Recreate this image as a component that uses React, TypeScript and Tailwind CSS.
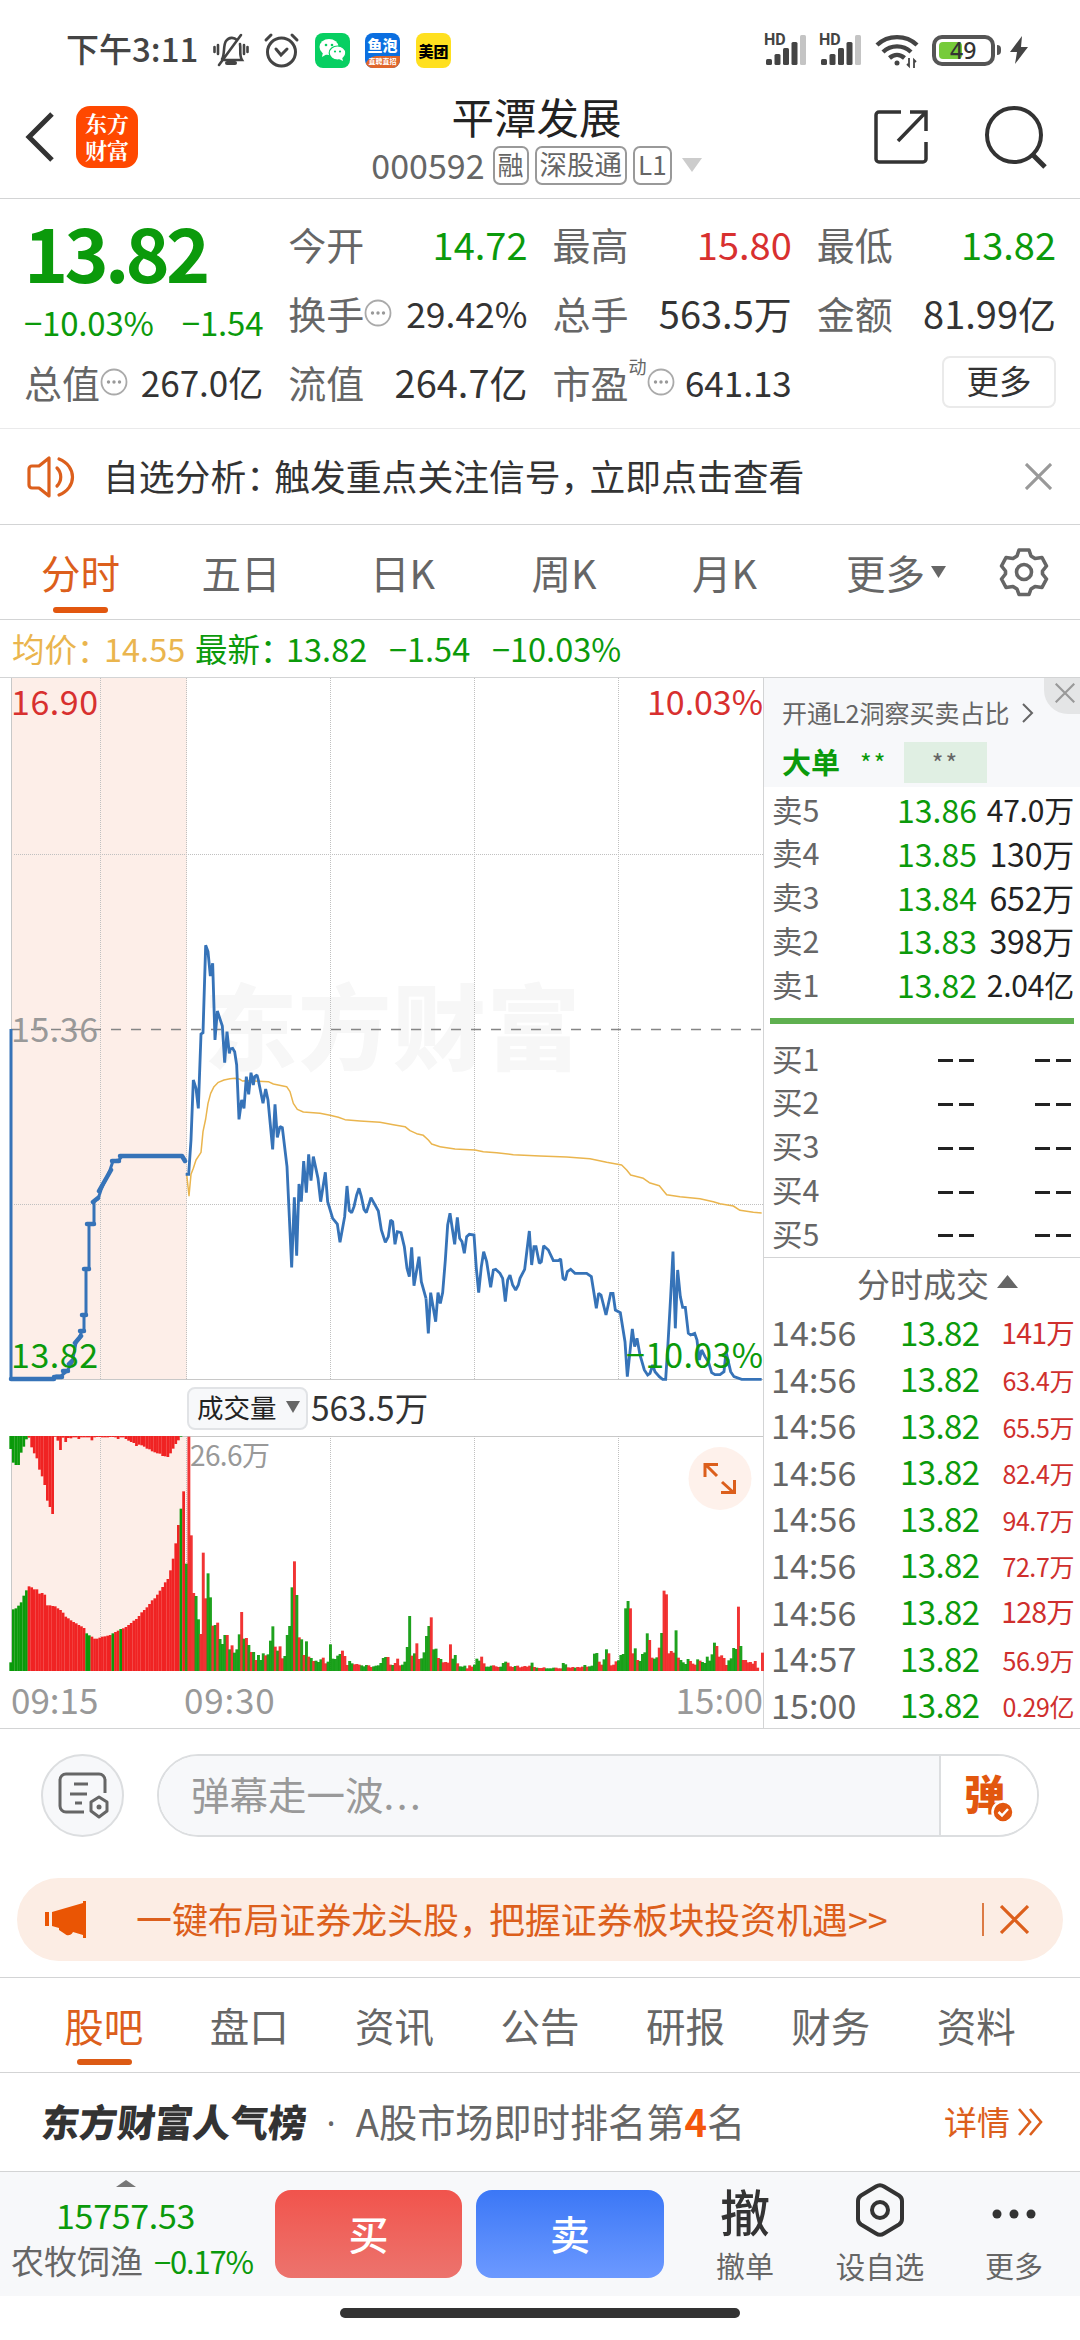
import React from "react";

type Level = {
  label: string;
  price: string;
  amount: string;
};

type Trade = {
  time: string;
  price: string;
  amount: string;
};

const sells: Level[] = [
  { label: "卖5", price: "13.86", amount: "47.0万" },
  { label: "卖4", price: "13.85", amount: "130万" },
  { label: "卖3", price: "13.84", amount: "652万" },
  { label: "卖2", price: "13.83", amount: "398万" },
  { label: "卖1", price: "13.82", amount: "2.04亿" },
];

const buys = ["买1", "买2", "买3", "买4", "买5"];

const trades: Trade[] = [
  { time: "14:56", price: "13.82", amount: "141万" },
  { time: "14:56", price: "13.82", amount: "63.4万" },
  { time: "14:56", price: "13.82", amount: "65.5万" },
  { time: "14:56", price: "13.82", amount: "82.4万" },
  { time: "14:56", price: "13.82", amount: "94.7万" },
  { time: "14:56", price: "13.82", amount: "72.7万" },
  { time: "14:56", price: "13.82", amount: "128万" },
  { time: "14:57", price: "13.82", amount: "56.9万" },
  { time: "15:00", price: "13.82", amount: "0.29亿" },
];

const infoTabs = ["股吧", "盘口", "资讯", "公告", "研报", "财务", "资料"];

// price lines, three units per pixel
const morningPrice =
  "17,763 26,763 33,660 40,480 48,505 55,565 63,342 69,338 77,76 84,95 91,168 98,130 105,360 112,273 127,318 134,428 141,335 148,400 151,387 158,385 164,395 170,435 177,598 185,540 192,565 199,470 206,523 213,458 220,495 224,470 231,465 235,480 249,550 257,507 264,540 278,688 285,553 292,652 300,620 307,623 321,740 335,1042 343,832 350,1007 357,792 364,845 371,723 379,818 386,703 393,782 400,710 414,775 422,845 436,757 443,845 458,895 472,912 480,967 494,890 501,798 508,872 515,878 522,860 530,825 537,805 544,830 552,868 559,878 573,833 595,873 604,930 616,967 625,950 632,900 638,905 645,973 652,935 663,938 673,980 681,1045 688,1070 695,982 702,1097 717,1010 724,1085 738,1135";
const afternoonPrice =
  "138,1195 145,1300 152,1178 167,1265 174,1178 181,1210 188,1178 196,1080 203,975 210,940 224,1033 232,952 239,1015 246,1025 253,1060 260,1010 268,1003 282,1005 289,1105 296,1178 304,1100 311,1055 320,1085 332,1162 340,1110 347,1108 360,1120 368,1135 376,1205 383,1140 390,1125 398,1155 407,1170 415,1155 420,1135 434,1108 441,1050 448,993 455,1095 462,1040 468,1040 478,1090 484,1085 491,1037 505,1050 520,1082 535,1082 542,1077 549,1135 556,1140 562,1115 572,1108 585,1120 620,1120 634,1130 642,1180 649,1225 656,1180 663,1185 678,1245 692,1180 699,1180 706,1230 721,1238 735,1325 742,1430 750,1355 757,1287 764,1340 771,1315 780,1365 793,1410 803,1425 810,1420 818,1395 825,1415 838,1430 848,1438 857,1438 864,1330 872,1190 879,1055 886,1285 893,1110 901,1190 908,1222 916,1222 925,1300 932,1305 944,1300 951,1320 958,1380 965,1350 975,1370 985,1385 995,1418 1005,1424 1020,1424 1032,1415 1038,1355 1045,1385 1052,1415 1062,1430 1085,1438 1145,1438";
const morningAverage =
  "20,763 27,827 33,763 40,745 48,720 63,697 69,635 77,597 84,550 92,520 102,500 115,487 132,480 150,476 165,475 180,478 187,483 200,482 265,485 280,492 320,500 330,515 340,550 352,568 370,576 420,580 450,586 475,592 495,599 540,603 600,607 640,614 675,620 690,632 710,641 730,646 745,660 755,672 780,680";
const afternoonAverage =
  "180,740 225,747 285,750 310,755 350,758 400,764 480,768 560,771 630,776 680,787 725,795 740,810 752,825 790,835 808,848 838,857 860,884 900,890 960,896 1000,905 1020,911 1060,918 1080,931 1120,937 1145,939";

// volume bars: top edge and colour, base line at 903
const auctionBars =
  "877g 718g 715g 707g 697g 677g 661g 649r 652r 658r 658r 671r 669r 674r 706r 706r 708r 709r 715r 720r 728r 740r 745r 751r 756r 760r 765r 769r 774r 790g 796g 800r 806r 806r 803r 800r 799r 797r 795r 790g 786r 782r 777g 775r 771r 765r 759r 752r 747r 738r 727r 720r 712r 702r 691r 685r 674r 662r 651r 637r 627r 601r 566r 520r 465r 416g 364r";
const sessionBars =
  "581g 200r 496r 669r 678g 748g 792r 548r 685r 610g 682g 767r 765g 758r 807g 822g 795g 795r 838g 826r 848g 838g 793g 726r 806g 804r 825g 846r 846g 870r 855g 870g 850g 856r 853g 812g 769g 830r 842g 829r 865r 858g 795g 768g 652g 574r 675g 802r 808g 855r 814g 860r 864g 873r 872g 876g 868g 863r 880r 875g 823g 866g 867g 857g 852g 842r 858r 885r 873g 880g 883r 882r 884r 886g 889g 885g 886r 891r 889g 887g 886g 879g 864g 861g 861r 884r 885g 879r 866r 886r 884g 875g 831g 738g 857r 850g 820r 867r 865g 847g 798g 768g 742r 838g 836g 864r 867g 877r 876r 878r 823r 866g 855g 880r 889g 890g 887g 895r 886r 890r 884g 866g 872g 860r 880r 890g 890g 887g 886r 889r 891r 890g 879g 875g 878r 889r 891r 888g 887r 892r 890r 888r 890r 887r 878g 891r 893g 894r 894r 892r 895g 895g 895g 893g 893r 895r 895r 879g 883g 892r 893r 891r 893g 891r 892r 890r 885g 890r 889g 887g 851g 849g 875r 884r 868g 838g 850r 886r 884r 874r 871g 855g 852g 715g 693g 715r 850r 835g 870r 873g 852g 847g 790g 810r 863r 866g 862g 833r 789g 662r 673r 850r 843r 848r 781g 863r 870g 877g 882g 867g 873r 881r 884r 868g 872r 876g 879g 860g 872g 853g 818g 828r 860r 856r 864r 885r 871g 865g 834g 837g 710r 828g 870r 870r 877r 876r 881r 873r 893r 903r 848r";
const unmatchedBars =
  "237g 278g 285g 285g 248g 230g 208g 203r 232r 250r 265r 299r 319r 345r 392r 411r 432r 200r 212r 240r 203r 216r 204r 205r 202r 202r 207r 202r 202r 202r 202r 211r 202r 201r 201r 202r 202r 202r 201r 201r 202r 207r 202r 202r 207r 212r 216r 219r 228r 224r 226r 230r 236r 238r 244r 247r 250r 251r 258r 259r 261r 250r 236r 222r 211r 200g";

function parseBars(data: string) {
  return data.split(" ").map((item) => ({
    y: parseInt(item, 10),
    fill: item.endsWith("g") ? "#0b9a0b" : "#f02323",
  }));
}

function InfoDot() {
  return (
    <svg width="28" height="28" viewBox="0 0 28 28" className="shrink-0">
      <circle cx="14" cy="14" r="12.5" fill="none" stroke="#aaa" strokeWidth="1.8" />
      <circle cx="8.5" cy="14" r="1.7" fill="#999" />
      <circle cx="14" cy="14" r="1.7" fill="#999" />
      <circle cx="19.5" cy="14" r="1.7" fill="#999" />
    </svg>
  );
}

function Cross({ size, color, width = 2.5 }: { size: number; color: string; width?: number }) {
  return (
    <svg width={size} height={size} viewBox="0 0 28 28" className="shrink-0">
      <path d="M1 1L27 27M27 1L1 27" stroke={color} strokeWidth={width} fill="none" />
    </svg>
  );
}

function Signal() {
  return (
    <div className="relative h-[30px] w-[42px]">
      <svg width="42" height="30" viewBox="0 0 42 30">
        <rect x="1" y="24" width="6" height="6" rx="1.5" fill="#444" />
        <rect x="9.5" y="19" width="6" height="11" rx="1.5" fill="#444" />
        <rect x="18" y="13" width="6" height="17" rx="1.5" fill="#444" />
        <rect x="26.5" y="7" width="6" height="23" rx="1.5" fill="#444" />
        <rect x="35" y="0" width="6" height="30" rx="1.5" fill="#c4c4c4" />
      </svg>
      <span className="absolute -left-px -top-[3px] font-[Roboto,sans-serif] text-[16px] font-bold leading-none text-[#444]">
        HD
      </span>
    </div>
  );
}

function StatusBar() {
  return (
    <div className="flex h-[84px] items-center pt-4 pl-[66px] pr-[51px] text-[#444]">
      <span className="-mt-1 w-[147px] whitespace-nowrap text-[33px] font-medium leading-none">下午3:11</span>
      <svg width="36" height="36" viewBox="0 0 36 36" fill="none" stroke="#444" strokeWidth="2.6" strokeLinecap="round">
        <path d="M9 27C12 23 10 13 13 9C16 5 21 5 24 8M27 12C28 18 26 23 29 28H10M28 3L6 33" />
        <path d="M14 31h8" strokeWidth="4" />
        <path d="M5 13v9M1.5 15v5M31 13v9M34.5 15v5" />
      </svg>
      <svg className="ml-[14px]" width="37" height="37" viewBox="0 0 37 37" fill="none" stroke="#444" strokeWidth="3" strokeLinecap="round">
        <circle cx="18.5" cy="20" r="14" />
        <path d="M13 17L18 23L24 17M3 8L8 3M29 3L34 8" />
      </svg>
      <div className="ml-[15px] flex size-[35px] items-center justify-center rounded-[8px] bg-[#07cf62]">
        <svg width="27" height="24" viewBox="0 0 27 24">
          <ellipse cx="10" cy="9" rx="9.5" ry="8" fill="#fff" />
          <path d="M4 14l-1 5 5-3z" fill="#fff" />
          <ellipse cx="18.5" cy="15" rx="8.3" ry="7" fill="#fff" stroke="#07cf62" strokeWidth="1.2" />
          <path d="M20 21l4 2-1-4z" fill="#fff" />
          <g fill="#07cf62">
            <circle cx="7" cy="7" r="1.3" />
            <circle cx="13" cy="7" r="1.3" />
            <circle cx="16" cy="13.5" r="1.1" />
            <circle cx="21" cy="13.5" r="1.1" />
          </g>
        </svg>
      </div>
      <div className="ml-[15px] flex h-[35px] w-[35px] flex-col overflow-hidden rounded-[8px] bg-[#0b6fe0] text-center text-white">
        <span className="h-[23px] whitespace-nowrap pt-px text-[15px] font-black leading-[22px]">鱼泡</span>
        <span className="h-[12px] whitespace-nowrap rounded-tl-full bg-[#e0662b] text-[7px] font-bold leading-[11px]">
          直聘直招
        </span>
      </div>
      <div className="ml-4 flex size-[35px] items-center justify-center rounded-[8px] bg-[#ffe01f]">
        <span className="whitespace-nowrap text-[15px] font-black leading-none text-black">美团</span>
      </div>
      <div className="ml-auto flex items-center">
        <Signal />
        <div className="w-[13px]" />
        <Signal />
        <svg className="ml-[13px] mt-1" width="44" height="36" viewBox="0 0 44 36" fill="none" stroke="#444" strokeWidth="4.4">
          <path d="M2 11C13 0.500 31 0.500 42 11M8 18C16 10.500 28 10.500 36 18M14.500 24C19 20 25 20 29.500 24" />
          <circle cx="22" cy="29" r="2.500" fill="#444" stroke="none" />
          <path d="M34 24v8l-2-2M39 34v-8l2 2" strokeWidth="1.8" />
        </svg>
        <div className="relative ml-[13px] h-[31px] w-[63px] rounded-[10px] border-[4px] border-[#555]">
          <div className="ml-[3px] mt-[3px] h-[17px] w-[23px] rounded-[4px] bg-[#76cb3a]" />
          <span className="absolute left-[14px] top-[-1px] font-['Noto_Sans',sans-serif] text-[23px] font-medium leading-6 text-[#333]">
            49
          </span>
        </div>
        <div className="ml-[2px] h-[10px] w-[4px] rounded-r-full bg-[#555]" />
        <svg className="ml-2" width="20" height="30" viewBox="0 0 20 30">
          <path d="M13 1L1 17h7L6 29L19 12h-7z" fill="#444" />
        </svg>
      </div>
    </div>
  );
}

function Header() {
  return (
    <div className="flex h-[115px] items-center justify-between border-b border-[#d3d4d5] pb-2 pl-[25px] pr-8">
      <div className="flex w-[220px] items-center">
        <svg width="30" height="50" viewBox="0 0 30 50">
          <path d="M27 2L4 25L27 48" fill="none" stroke="#333" strokeWidth="5" />
        </svg>
        <div className="ml-[21px] flex size-[62px] flex-col items-center justify-center rounded-[14px] bg-[#ff4800] pb-[2px] font-bold text-white">
          <span className="font-['Noto_Serif_CJK_SC','Noto_Sans_CJK_SC',sans-serif] text-[22px] leading-[27px]">东方</span>
          <span className="font-['Noto_Serif_CJK_SC','Noto_Sans_CJK_SC',sans-serif] text-[22px] leading-[27px]">财富</span>
        </div>
      </div>
      <div className="flex flex-col items-center">
        <div className="text-[42.500px] leading-[56px] text-[#222]">平潭发展</div>
        <div className="flex h-[42px] items-center gap-[6px] text-[26px] leading-none text-[#666]">
          <span className="mr-[2px] text-[34px]">000592</span>
          <span className="flex h-[39px] items-center rounded-[7px] border-2 border-[#999] px-[3px] pb-[3px]">融</span>
          <span className="flex h-[39px] items-center rounded-[7px] border-2 border-[#999] px-[3px] pb-[3px] text-[27.500px]">深股通</span>
          <span className="flex h-[39px] items-center rounded-[7px] border-2 border-[#999] px-[3px] pb-[3px]">L1</span>
          <svg className="ml-[4px]" width="20" height="14" viewBox="0 0 20 14">
            <path d="M0 0h20L10 14z" fill="#ccc" />
          </svg>
        </div>
      </div>
      <div className="flex w-[220px] items-center justify-end gap-[56px]">
        <svg width="54" height="54" viewBox="0 0 54 54" fill="none" stroke="#333" strokeWidth="3.500">
          <path d="M27 2H5a3 3 0 0 0-3 3V49a3 3 0 0 0 3 3H49a3 3 0 0 0 3-3V32" />
          <path d="M36 2H52V21M52 2L24 31" />
        </svg>
        <svg width="64" height="64" viewBox="0 0 64 64" fill="none" stroke="#333" strokeWidth="4">
          <circle cx="30" cy="30" r="27" />
          <path d="M49 50L61 62" strokeWidth="5" />
        </svg>
      </div>
    </div>
  );
}

type StatProps = {
  label: string;
  value: string;
  color?: string;
  size?: string;
  dot?: boolean;
  sup?: string;
};

function Stat({ label, value, color = "text-[#333]", size = "text-[38px]", dot = false, sup }: StatProps) {
  return (
    <div className="flex h-[69px] items-center justify-between whitespace-nowrap leading-none">
      <div className="relative flex items-center">
        <span className="text-[38px] text-[#666]">{label}</span>
        {sup && <span className="-mt-8 text-[18px] text-[#666]">{sup}</span>}
        {dot && <InfoDot />}
      </div>
      <span className={`${size} ${color}`}>{value}</span>
    </div>
  );
}

function Stats() {
  return (
    <div className="grid h-[230px] grid-cols-4 grid-rows-[69px_69px_69px] gap-x-[25px] border-b border-[#eaeaeb] px-6 pt-[10px]">
      <div className="row-span-2 flex flex-col whitespace-nowrap leading-none text-[#0b9a0b]">
        <div className="h-[86px] text-[75px] font-bold tracking-[-3.800px] leading-[84px]">13.82</div>
        <div className="flex justify-between pt-[11px] text-[33px] tracking-[-0.200px]">
          <span>−10.03%</span>
          <span>−1.54</span>
        </div>
      </div>
      <Stat label="今开" value="14.72" color="text-[#0b9a0b]" />
      <Stat label="最高" value="15.80" color="text-[#d8302f]" />
      <Stat label="最低" value="13.82" color="text-[#0b9a0b]" />
      <Stat label="换手" value="29.42%" size="text-[35.500px]" dot />
      <Stat label="总手" value="563.5万" />
      <Stat label="金额" value="81.99亿" />
      <Stat label="总值" value="267.0亿" size="text-[35px]" dot />
      <Stat label="流值" value="264.7亿" />
      <Stat label="市盈" value="641.13" size="text-[35px]" sup="动" dot />
      <div className="flex items-center justify-end">
        <div className="flex h-[52px] w-[114px] items-center justify-center rounded-[8px] border-2 border-[#eaeaea] pb-[2px] text-[32.500px] leading-none text-[#333]">
          更多
        </div>
      </div>
    </div>
  );
}

function Notice() {
  return (
    <div className="flex h-[96px] items-center border-b border-[#d3d4d5] pl-[27px] pr-7">
      <svg width="48" height="42" viewBox="0 0 48 42" fill="none" stroke="#dc5f1c" strokeWidth="3.200" strokeLinejoin="round" strokeLinecap="round">
        <path d="M22 2V40L12 32H5a3 3 0 0 1-3-3V13a3 3 0 0 1 3-3H12z" />
        <path d="M30 12C35 17 35 25 30 30M32 3C50 10 50 32 32 39" />
      </svg>
      <div className="ml-[28px] mb-[2px] flex whitespace-nowrap text-[35.800px] leading-none text-[#333]">
        <span>自选分析</span>
        <span className="w-[28px]">：</span>
        <span>触发重点关注信号</span>
        <span className="w-[29px]">，</span>
        <span>立即点击查看</span>
      </div>
      <div className="ml-auto">
        <Cross size={27} color="#999" width={3.2} />
      </div>
    </div>
  );
}

function PeriodTabs() {
  return (
    <div className="flex h-[95px] border-b border-[#d3d4d5] text-[39.500px] leading-none text-[#666]">
      <div className="relative flex w-[161px] items-center justify-center text-[#dc5f1c]">
        <span>分时</span>
        <div className="absolute bottom-[6px] left-[53px] h-[6px] w-[55px] rounded-full bg-[#e2570f]" />
      </div>
      <div className="flex w-[160px] items-center justify-center">五日</div>
      <div className="flex w-[163px] items-center justify-center">日K</div>
      <div className="flex w-[160px] items-center justify-center">周K</div>
      <div className="flex w-[161px] items-center justify-center">月K</div>
      <div className="flex w-[182px] items-center justify-center gap-[6px]">
        <span>更多</span>
        <svg width="15" height="12" viewBox="0 0 15 12">
          <path d="M0 0h15L7.500 12z" fill="#666" />
        </svg>
      </div>
      <div className="flex w-[73px] items-center justify-center">
        <svg width="50" height="50" viewBox="0 0 50 50" fill="none" stroke="#666" strokeWidth="3.600" strokeLinejoin="round">
          <path d="M20 3h10l2 6l4 2.500l7-1l4.500 8.500l-4 5v3l4 5l-4.500 8.500l-7-1l-4 2.500l-2 5.500h-10l-2-5.500l-4-2.500l-7 1l-4.500-8.500l4-5v-3l-4-5l4.500-8.500l7 1l4-2.500z" />
          <circle cx="25" cy="25" r="7.500" />
        </svg>
      </div>
    </div>
  );
}

function PriceLine() {
  return (
    <div className="flex h-[58px] items-center whitespace-nowrap border-b border-[#d3d4d5] pl-3 pb-px text-[32.500px] leading-none text-[#0b9a0b]">
      <div className="flex w-[183px] text-[#eab54e]">
        <span>均价</span>
        <span className="w-[27px]">：</span>
        <span>14.55</span>
      </div>
      <div className="flex w-[194px]">
        <span>最新</span>
        <span className="w-[26px]">：</span>
        <span>13.82</span>
      </div>
      <span className="w-[103px]">−1.54</span>
      <span>−10.03%</span>
    </div>
  );
}

function PriceChart() {
  return (
    <svg width="763" height="704" viewBox="0 678 763 704" className="block">
      <rect x="12" y="678" width="175" height="701" fill="#fdeee8" />
      <text x="204" y="1063" fontSize="93" fontWeight="900" fill="#f7f7f7" textLength="376">
        东方财富
      </text>
      <path d="M11.500 678V1379M11 1379.500H763" stroke="#c8c8c8" strokeWidth="1" />
      <path
        d="M100.500 678V1379M186.500 678V1379M330.500 678V1379M474.500 678V1379M618.500 678V1379M14 854.500H763M14 1204.500H763"
        stroke="#c0c0c0"
        strokeWidth="1"
        strokeDasharray="1 1"
        fill="none"
      />
      <path d="M11 1029.500H763" stroke="#858585" strokeWidth="1.500" strokeDasharray="10 10" />
      <g fill="none" stroke="#eab54e" strokeWidth="4.500" strokeLinejoin="round">
        <polyline points={morningAverage} transform="translate(180 920) scale(0.33333)" />
        <polyline points={afternoonAverage} transform="translate(380 900) scale(0.33333)" />
      </g>
      <g fill="none" stroke="#3673b8" strokeWidth="3" strokeLinejoin="round">
        <path d="M11 1029V1379" />
        <path
          d="M11 1379H54L56 1376H61L67 1371L72 1363L76 1343L79 1338L82 1331H84V1315H86V1269H89V1224H94V1201L98 1199L101 1190L104 1183L107 1177L110 1170L113 1161L119 1160L122 1156"
          strokeWidth="3"
        />
        <path
          d="M11 1379H54M54 1377H62M63 1371H68M69 1364L72 1361M75 1343L81 1336M80 1331H84M82 1315H86M84 1269H89M87 1224H94M93 1202L98 1198M99 1191L111 1170M112 1161H119M120 1156H182L185 1161"
          strokeWidth="4.500"
          strokeLinecap="round"
        />
      </g>
      <g fill="none" stroke="#3673b8" strokeWidth="8.500" strokeLinejoin="miter" strokeMiterlimit="1.500">
        <polyline points={morningPrice} transform="translate(180 920) scale(0.33333)" />
        <polyline points={afternoonPrice} transform="translate(380 900) scale(0.33333)" />
      </g>
      <g fontSize="34">
        <text x="11" y="715" fill="#d8302f" textLength="87">16.90</text>
        <text x="763" y="715" fill="#d8302f" textAnchor="end" textLength="116">10.03%</text>
        <text x="11" y="1042" fill="#999" textLength="87">15.36</text>
        <text x="11" y="1368" fill="#0b9a0b" textLength="87">13.82</text>
        <text x="763" y="1368" fill="#0b9a0b" textAnchor="end" textLength="137">−10.03%</text>
      </g>
    </svg>
  );
}

function VolumeChart() {
  return (
    <svg width="764" height="238" viewBox="0 1435 764 238" className="block">
      <rect x="12" y="1436" width="175" height="235" fill="#fdeee8" />
      <path d="M11.500 1436V1671M11 1436.500H763" stroke="#c8c8c8" strokeWidth="1" />
      <path
        d="M100.500 1436V1671M186.500 1436V1671M330.500 1436V1671M474.500 1436V1671M618.500 1436V1671"
        stroke="#c0c0c0"
        strokeWidth="1"
        strokeDasharray="1 1"
      />
      <g transform="translate(0 1370) scale(0.33333)">
        {parseBars(auctionBars).map((bar, i) => (
          <rect key={i} x={28 + i * 7.86} y={bar.y} width="8.200" height={903 - bar.y} fill={bar.fill} />
        ))}
        {parseBars(unmatchedBars).map((bar, i) => (
          <rect key={i} x={28 + i * 7.86} y={198} width="8.200" height={bar.y - 198} fill={bar.fill} />
        ))}
        {parseBars(sessionBars).map((bar, i) => (
          <rect key={i} x={555 + i * 7.2} y={bar.y} width="8.800" height={903 - bar.y} fill={bar.fill} fillOpacity="0.92" />
        ))}
      </g>
      <text x="190" y="1466" fontSize="28" fill="#999" textLength="80">26.6万</text>
      <circle cx="720" cy="1478.500" r="31.500" fill="#fef1eb" />
      <path
        d="M717 1476L706 1465M705 1477V1464.500H718M722 1482L733 1492M734.500 1480V1492.500H721"
        fill="none"
        stroke="#dc5f1c"
        strokeWidth="3"
      />
    </svg>
  );
}

function ChartColumn() {
  return (
    <div className="w-[764px] border-r border-[#d3d4d5]">
      <PriceChart />
      <div className="flex h-[53px] items-center whitespace-nowrap pl-[187px] leading-none">
        <div className="flex h-[43px] w-[121px] items-center rounded-[8px] border-2 border-[#e1e3e6] bg-[#f7f8fa] pl-[8px] pb-[3px] text-[26.500px] text-[#222]">
          <span>成交量</span>
          <svg className="ml-[9px]" width="14" height="12" viewBox="0 0 14 12">
            <path d="M0 0h14L7 12z" fill="#666" />
          </svg>
        </div>
        <span className="mb-1 ml-[3px] text-[33.500px] text-[#333]">563.5万</span>
      </div>
      <VolumeChart />
      <div className="flex h-[50px] items-center whitespace-nowrap pl-[11px] text-[35px] leading-none text-[#999]">
        <span className="w-[173px]">09:15</span>
        <span className="tracking-[0.800px]">09:30</span>
        <span className="ml-auto">15:00</span>
      </div>
    </div>
  );
}

function OrderBook() {
  return (
    <div className="flex flex-1 flex-col whitespace-nowrap leading-none">
      <div className="relative h-[109px] bg-[#f7f8fa] pl-[18px] pt-[22px]">
        <div className="flex items-center text-[25px] text-[#666]">
          <span>开通L2洞察买卖占比</span>
          <svg className="ml-[13px] mt-px" width="12" height="20" viewBox="0 0 12 20">
            <path d="M1 1L10 10L1 19" fill="none" stroke="#666" strokeWidth="2" />
          </svg>
        </div>
        <div className="mt-[17px] flex h-[41px] items-center">
          <span className="pb-[2px] text-[29px] font-bold text-[#0b9a0b]">大单</span>
          <span className="ml-[20px] w-[44px] text-[25px] tracking-[2px] text-[#0b9a0b]">**</span>
          <span className="flex h-[41px] w-[83px] items-center justify-center bg-[#e0efe3] text-[25px] tracking-[2px] text-[#666]">
            **
          </span>
        </div>
        <div className="absolute right-0 top-0 flex h-[36px] w-[36px] items-center justify-center rounded-bl-[24px] bg-[#e4e5e6] pb-[6px] pl-[6px]">
          <Cross size={20} color="#999" width={3} />
        </div>
      </div>
      {sells.map((row) => (
        <div key={row.label} className="flex h-[44px] items-center pl-2 pr-[6px]">
          <span className="text-[30.500px] text-[#666]">{row.label}</span>
          <span className="ml-auto text-[32px] text-[#0b9a0b]">{row.price}</span>
          <span
            className={`w-[97px] text-right tracking-[-0.200px] text-[#222] ${row.amount.includes(".") ? "text-[30px]" : "text-[32px]"}`}
          >
            {row.amount}
          </span>
        </div>
      ))}
      <div className="mx-[6px] mt-[12px] mb-[13px] h-[6px] bg-[#5fb050]" />
      {buys.map((label) => (
        <div key={label} className="flex h-[44px] items-center pb-[3px] pl-2 pr-[9px]">
          <span className="text-[30.500px] text-[#666]">{label}</span>
          <span className="ml-auto mt-[5px] flex gap-[6px]">
            <i className="h-[3px] w-[15px] bg-[#222]" />
            <i className="h-[3px] w-[15px] bg-[#222]" />
          </span>
          <span className="ml-[61px] mt-[5px] flex gap-[6px]">
            <i className="h-[3px] w-[15px] bg-[#222]" />
            <i className="h-[3px] w-[15px] bg-[#222]" />
          </span>
        </div>
      ))}
      <div className="flex h-[52px] items-center justify-center border-t border-[#d3d4d5] pl-[31px] text-[33px] text-[#666]">
        <span>分时成交</span>
        <svg className="ml-2 mb-1" width="21" height="13" viewBox="0 0 21 13">
          <path d="M0 13h21L10.500 0z" fill="#666" />
        </svg>
      </div>
      {trades.map((row, i) => (
        <div key={i} className="flex h-[46.700px] items-center pl-[7px] pr-[6px]">
          <span className="w-[129px] text-[34px] tracking-[0.100px] text-[#666]">{row.time}</span>
          <span className="text-[33px] tracking-[-0.600px] text-[#0b9a0b]">{row.price}</span>
          <span
            className={`ml-auto text-[#cf2f2d] ${row.amount.length > 4 ? "pt-1 text-[25px] tracking-[-0.400px]" : "text-[28.500px] tracking-[-0.800px]"}`}
          >
            {row.amount}
          </span>
        </div>
      ))}
    </div>
  );
}

function Danmu() {
  return (
    <div className="flex h-[136px] items-center pl-[41px] pr-[41px] pb-[3px]">
      <div className="flex size-[83px] items-center justify-center rounded-full border-2 border-[#dcdee0] bg-[#f7f8fa]">
        <svg width="52" height="50" viewBox="0 0 52 50" fill="none" stroke="#666" strokeWidth="3">
          <path d="M27 41H9a6 6 0 0 1-6-6V9a6 6 0 0 1 6-6H42a6 6 0 0 1 6 6V22" />
          <path d="M17 13h14M13 23h17M18 32h7" />
          <path d="M42 26l8 5v9l-8 6l-8-6v-9z" strokeLinejoin="round" />
          <circle cx="42" cy="36" r="2.500" fill="#666" stroke="none" />
        </svg>
      </div>
      <div className="ml-[33px] flex h-[83px] flex-1 overflow-hidden rounded-full border-2 border-[#dcdee0]">
        <div className="flex flex-1 items-center bg-[#f7f8fa] pl-[32px] pb-1 text-[38.500px] leading-none text-[#999]">
          弹幕走一波<span className="tracking-[2.500px]">...</span>
        </div>
        <div className="relative w-[98px] border-l-2 border-[#dcdee0] bg-white">
          <span className="absolute left-[23px] top-[16px] text-[41px] font-black leading-none text-[#e2570f]">弹</span>
          <svg className="absolute left-[50px] top-[44px]" width="24" height="24" viewBox="0 0 24 24">
            <circle cx="12" cy="12" r="10.500" fill="#e2570f" stroke="#fff" strokeWidth="2.500" />
            <path d="M7.500 12L11 15.500L17 9" fill="none" stroke="#fff" strokeWidth="2.500" />
          </svg>
        </div>
      </div>
    </div>
  );
}

function Banner() {
  return (
    <div className="mx-[17px] mt-[13px] mb-[16px] flex h-[83px] items-center rounded-full bg-[#fcede4] pl-[28px] pr-[34px] text-[#dc5f1c]">
      <svg width="42" height="38" viewBox="0 0 42 38" fill="#ea5504">
        <path d="M0 11h4v14H0zM7 11L38 2V0h3v37h-3V34L28 31C26 35 22 35 20 33L14 29V27L7 25z" />
      </svg>
      <div className="ml-[49px] mb-[2px] flex whitespace-nowrap text-[35.900px] leading-none">
        <span>一键布局证券龙头股</span>
        <span className="w-[30px]">，</span>
        <span>把握证券板块投资机遇&gt;&gt;</span>
      </div>
      <div className="ml-auto mr-4 h-[33px] w-[2px] bg-[#dc7a44]" />
      <Cross size={29} color="#dc5f1c" width={3} />
    </div>
  );
}

function InfoTabs() {
  return (
    <div className="flex h-[96px] border-y border-[#d3d4d5] px-[31px] text-[39.500px] leading-none text-[#666]">
      {infoTabs.map((tab, i) => (
        <div key={tab} className={`relative flex flex-1 items-center justify-center ${i === 0 ? "text-[#dc5f1c]" : ""}`}>
          {tab}
          {i === 0 && <div className="absolute bottom-[7px] left-[46px] h-[6px] w-[55px] rounded-full bg-[#dc5a14]" />}
        </div>
      ))}
    </div>
  );
}

function Ranking() {
  return (
    <div className="flex h-[98px] items-center whitespace-nowrap pl-[42px] pr-9 pb-[2px] leading-none">
      <span className="-skew-x-6 text-[38px] font-black tracking-[-0.200px] text-[#333]">东方财富人气榜</span>
      <span className="ml-[20px] mr-[20px] mt-1 font-['Noto_Sans',sans-serif] text-[34px] text-[#666]">·</span>
      <span className="text-[38.200px] text-[#666]">
        A股市场即时排名第<b className="text-[#f4560c]">4</b>名
      </span>
      <span className="ml-auto text-[33px] text-[#dc5f1c]">详情</span>
      <svg className="ml-[7px] mt-px" width="27" height="28" viewBox="0 0 27 28" fill="none" stroke="#dc5f1c" strokeWidth="2.600">
        <path d="M2 1L13 14L2 27M13 1L24 14L13 27" />
      </svg>
    </div>
  );
}

function BottomBar() {
  return (
    <div className="flex h-[125px] border-t border-[#d3d4d5] bg-[#f7f8fa] leading-none text-[#666]">
      <div className="flex w-[275px] flex-col whitespace-nowrap pl-[11px] pt-[8px]">
        <svg className="ml-[105px]" width="20" height="7" viewBox="0 0 20 7">
          <path d="M0 7h20L10 0z" fill="#777" />
        </svg>
        <span className="ml-[45px] mt-[11px] text-[34px] tracking-[-0.300px] text-[#0b9a0b]">15757.53</span>
        <div className="mt-[12px] flex items-center text-[33px]">
          <span>农牧饲渔</span>
          <span className="ml-[11px] text-[31px] tracking-[-1.200px] text-[#0b9a0b]">−0.17%</span>
        </div>
      </div>
      <div className="mt-[18px] flex h-[88px] w-[187px] items-center justify-center rounded-[16px] bg-linear-to-b from-[#f1534c] to-[#ec736d] pb-[2px] text-[40px] font-medium text-white">
        买
      </div>
      <div className="ml-[14px] mt-[18px] flex h-[88px] w-[188px] items-center justify-center rounded-[16px] bg-linear-to-b from-[#3b77f6] to-[#6c99ff] pb-[2px] text-[40px] font-medium text-white">
        卖
      </div>
      <div className="flex w-[162px] flex-col items-center text-[29px]">
        <span className="mt-[13px] text-[50px] font-medium text-[#333]">撤</span>
        <span className="mt-[16px]">撤单</span>
      </div>
      <div className="flex w-[108px] flex-col items-center text-[29.500px]">
        <svg className="mt-[11px]" width="50" height="54" viewBox="0 0 50 54" fill="none" stroke="#333" strokeWidth="4" strokeLinejoin="round">
          <path d="M21 3.500Q25 1 29 3.500L44 12.500Q47 14.500 47 18V36Q47 39.500 44 41.500L29 50.500Q25 53 21 50.500L6 41.500Q3 39.500 3 36V18Q3 14.500 6 12.500z" />
          <circle cx="25" cy="27" r="8" />
        </svg>
        <span className="mt-[14px]">设自选</span>
      </div>
      <div className="ml-[26px] flex w-[108px] flex-col items-center text-[29px]">
        <svg className="mt-[37px]" width="44" height="10" viewBox="0 0 44 10" fill="#333">
          <circle cx="5" cy="5" r="4.500" />
          <circle cx="22" cy="5" r="4.500" />
          <circle cx="39" cy="5" r="4.500" />
        </svg>
        <span className="mt-[32px]">更多</span>
      </div>
    </div>
  );
}

function App() {
  return (
    <div className="flex h-[2340px] w-[1080px] flex-col overflow-hidden bg-white font-['Noto_Sans_CJK_SC','Noto_Sans',sans-serif]">
      <StatusBar />
      <Header />
      <Stats />
      <Notice />
      <PeriodTabs />
      <PriceLine />
      <div className="flex h-[1051px] border-b border-[#d3d4d5]">
        <ChartColumn />
        <OrderBook />
      </div>
      <Danmu />
      <Banner />
      <InfoTabs />
      <Ranking />
      <BottomBar />
      <div className="mx-auto mt-[12px] h-[10px] w-[400px] rounded-full bg-[#333]" />
    </div>
  );
}

export default App;
